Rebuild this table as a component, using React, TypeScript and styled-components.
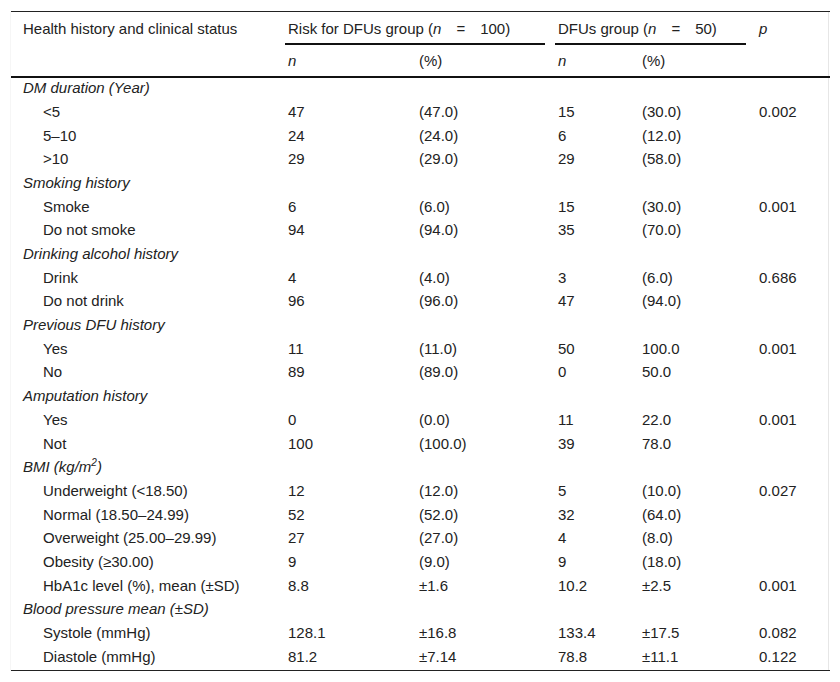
import styled, { createGlobalStyle } from "styled-components"

const GlobalStyle = createGlobalStyle`
  body {
    margin: 0;
    background: #fff;
    font-family: "Liberation Sans", Arial, sans-serif;
    color: #222;
  }
`

const Wrapper = styled.div`
  margin: 11px 0 0 10px;
  width: 819px;
  border-right: 1px solid #e6e6e6;
  border-left: 1px solid #f6f6f6;
  box-sizing: border-box;
`

const Table = styled.table`
  width: 819px;
  table-layout: fixed;
  border-collapse: separate;
  border-spacing: 0;
  font-size: 15px;
  line-height: 19.6px;
  border-top: 1px solid #222;
  border-bottom: 1px solid #222;
`

const HeadCell = styled.th<{ $first?: boolean; $rule?: boolean; $lower?: boolean }>`
  text-align: left;
  font-weight: normal;
  vertical-align: top;
  white-space: nowrap;
  padding: ${(p) => (p.$lower ? "6px 0 6px" : "7px 0 6px")};
  padding-left: ${(p) => (p.$first ? "12px" : "3px")};
  background: ${(p) =>
    p.$rule ? "linear-gradient(#111, #111) left bottom / calc(100% - 10px) 2px no-repeat" : "none"};
  border-bottom: ${(p) => (p.$lower ? "2px solid #111" : "none")};
`

const HeadRowSpan = styled(HeadCell)`
  border-bottom: 2px solid #111;
`

const Cell = styled.td<{ $indent?: boolean }>`
  padding: 0 0 4.1px 3px;
  white-space: nowrap;
  vertical-align: top;

  &:first-child {
    padding-left: ${(p) => (p.$indent ? "32px" : "12px")};
  }
`

const GroupCell = styled.td`
  padding: 0 0 4.1px 12px;
  font-style: italic;
  white-space: nowrap;
`

const Em = styled.i`
  font-style: italic;
`

const Sup = styled.sup`
  font-size: 10px;
  line-height: 0;
`

type Row = [string, string, string, string, string, string]

type Group = { title: React.ReactNode; rows: Row[] }

const groups: Group[] = [
  {
    title: "DM duration (Year)",
    rows: [
      ["<5", "47", "(47.0)", "15", "(30.0)", "0.002"],
      ["5–10", "24", "(24.0)", "6", "(12.0)", ""],
      [">10", "29", "(29.0)", "29", "(58.0)", ""],
    ],
  },
  {
    title: "Smoking history",
    rows: [
      ["Smoke", "6", "(6.0)", "15", "(30.0)", "0.001"],
      ["Do not smoke", "94", "(94.0)", "35", "(70.0)", ""],
    ],
  },
  {
    title: "Drinking alcohol history",
    rows: [
      ["Drink", "4", "(4.0)", "3", "(6.0)", "0.686"],
      ["Do not drink", "96", "(96.0)", "47", "(94.0)", ""],
    ],
  },
  {
    title: "Previous DFU history",
    rows: [
      ["Yes", "11", "(11.0)", "50", "100.0", "0.001"],
      ["No", "89", "(89.0)", "0", "50.0", ""],
    ],
  },
  {
    title: "Amputation history",
    rows: [
      ["Yes", "0", "(0.0)", "11", "22.0", "0.001"],
      ["Not", "100", "(100.0)", "39", "78.0", ""],
    ],
  },
  {
    title: (
      <>
        BMI (kg/m<Sup>2</Sup>)
      </>
    ),
    rows: [
      ["Underweight (<18.50)", "12", "(12.0)", "5", "(10.0)", "0.027"],
      ["Normal (18.50–24.99)", "52", "(52.0)", "32", "(64.0)", ""],
      ["Overweight (25.00–29.99)", "27", "(27.0)", "4", "(8.0)", ""],
      ["Obesity (≥30.00)", "9", "(9.0)", "9", "(18.0)", ""],
      ["HbA1c level (%), mean (±SD)", "8.8", "±1.6", "10.2", "±2.5", "0.001"],
    ],
  },
  {
    title: "Blood pressure mean (±SD)",
    rows: [
      ["Systole (mmHg)", "128.1", "±16.8", "133.4", "±17.5", "0.082"],
      ["Diastole (mmHg)", "81.2", "±7.14", "78.8", "±11.1", "0.122"],
    ],
  },
]

const widths = [274, 131, 139, 84, 117, 74]

export default function App() {
  return (
    <>
      <GlobalStyle />
      <Wrapper>
        <Table>
          <colgroup>
            {widths.map((w, i) => (
              <col key={i} style={{ width: w }} />
            ))}
          </colgroup>
          <thead>
            <tr>
              <HeadRowSpan $first rowSpan={2}>
                Health history and clinical status
              </HeadRowSpan>
              <HeadCell colSpan={2} $rule>
                Risk for DFUs group (<Em>n</Em>
                {"\u2003=\u2003"}100)
              </HeadCell>
              <HeadCell colSpan={2} $rule>
                DFUs group (<Em>n</Em>
                {"\u2003=\u2003"}50)
              </HeadCell>
              <HeadRowSpan rowSpan={2}>
                <Em>p</Em>
              </HeadRowSpan>
            </tr>
            <tr>
              <HeadCell $lower>
                <Em>n</Em>
              </HeadCell>
              <HeadCell $lower>(%)</HeadCell>
              <HeadCell $lower>
                <Em>n</Em>
              </HeadCell>
              <HeadCell $lower>(%)</HeadCell>
            </tr>
          </thead>
          <tbody>
            {groups.map((g, gi) => (
              <GroupRows key={gi} group={g} />
            ))}
          </tbody>
        </Table>
      </Wrapper>
    </>
  )
}

function GroupRows({ group }: { group: Group }) {
  return (
    <>
      <tr>
        <GroupCell colSpan={6}>{group.title}</GroupCell>
      </tr>
      {group.rows.map((r, i) => (
        <tr key={i}>
          {r.map((v, j) => (
            <Cell key={j} $indent={j === 0}>
              {v}
            </Cell>
          ))}
        </tr>
      ))}
    </>
  )
}
